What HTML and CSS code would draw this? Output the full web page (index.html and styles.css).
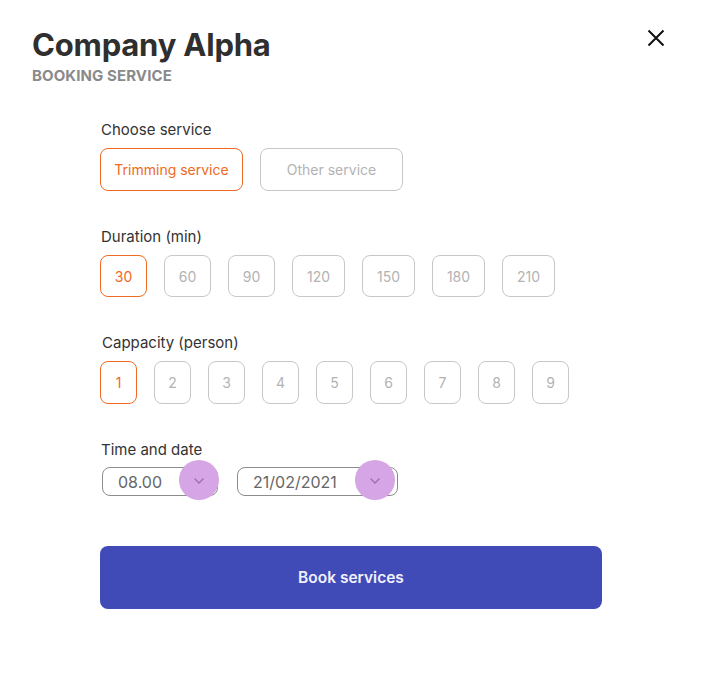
FILE: index.html
```html
<!DOCTYPE html>
<html>
<head>
<meta charset="utf-8">
<link rel="stylesheet" href="styles.css">
</head>
<body>
<div class="page">
  <header class="header">
    <div class="titles">
      <h1 class="title">Company Alpha</h1>
      <div class="subtitle">BOOKING SERVICE</div>
    </div>
    <button class="close" aria-label="Close">
      <svg width="18" height="18" viewBox="0 0 18 18"><path d="M1.5 1.5 L16.5 16.5 M16.5 1.5 L1.5 16.5" stroke="#111" stroke-width="2" fill="none"/></svg>
    </button>
  </header>

  <main class="form">
    <section class="group g-service">
      <div class="label">Choose service</div>
      <div class="options">
        <div class="opt service active">Trimming service</div>
        <div class="opt service">Other service</div>
      </div>
    </section>

    <section class="group g-duration">
      <div class="label">Duration (min)</div>
      <div class="options">
        <div class="opt dur active">30</div>
        <div class="opt dur">60</div>
        <div class="opt dur">90</div>
        <div class="opt dur wide">120</div>
        <div class="opt dur wide">150</div>
        <div class="opt dur wide">180</div>
        <div class="opt dur wide">210</div>
      </div>
    </section>

    <section class="group g-capacity">
      <div class="label label-cap">Cappacity (person)</div>
      <div class="options">
        <div class="opt cap active">1</div>
        <div class="opt cap">2</div>
        <div class="opt cap">3</div>
        <div class="opt cap">4</div>
        <div class="opt cap">5</div>
        <div class="opt cap">6</div>
        <div class="opt cap">7</div>
        <div class="opt cap">8</div>
        <div class="opt cap">9</div>
      </div>
    </section>

    <section class="group g-time">
      <div class="label">Time and date</div>
      <div class="selects">
        <div class="select time">
          <span>08.00</span>
          <span class="knob"><svg width="12" height="8" viewBox="0 0 12 8"><path d="M1.5 1.5 L6 6 L10.5 1.5" stroke="#9c6fae" stroke-width="1.3" fill="none"/></svg></span>
        </div>
        <div class="select date">
          <span>21/02/2021</span>
          <span class="knob"><svg width="12" height="8" viewBox="0 0 12 8"><path d="M1.5 1.5 L6 6 L10.5 1.5" stroke="#9c6fae" stroke-width="1.3" fill="none"/></svg></span>
        </div>
      </div>
    </section>

    <button class="book">Book services</button>
  </main>
</div>
</body>
</html>
```

FILE: styles.css
```css
* { box-sizing: border-box; }
html, body { margin: 0; padding: 0; background: #fff; }
body { font-family: "Inter", "Roboto", "Liberation Sans", sans-serif; color: #333; }

.page { width: 702px; height: 688px; }

.header {
  display: flex;
  justify-content: space-between;
  align-items: flex-start;
  padding: 26px 37px 0 32px;
}
.title {
  margin: 0;
  font-size: 31px;
  line-height: 38px;
  font-weight: 700;
  color: #2f2f2f;
  letter-spacing: -0.2px;
}
.subtitle {
  margin-top: 3px;
  font-size: 15px;
  line-height: 17px;
  font-weight: 700;
  color: #8a8a8a;
  letter-spacing: 0.1px;
}
.close {
  border: 0;
  background: none;
  padding: 0;
  margin-top: 3px;
  width: 18px;
  height: 18px;
  cursor: pointer;
}

.form {
  padding: 37px 0 0 100px;
}
.group { margin-bottom: 37px; }
.g-time { margin-bottom: 0; }
.label {
  font-size: 15px;
  line-height: 18px;
  color: #333;
  margin: 0 0 9px 1px;
}
.g-time .label { margin-bottom: 8px; }
.label-cap { margin-left: 2px; }

.options { display: flex; gap: 17px; }
.opt {
  display: flex;
  align-items: center;
  justify-content: center;
  border: 1px solid #c7c7c7;
  border-radius: 8px;
  color: #b3b3b3;
  font-size: 14px;
  height: 43px;
}
.opt.active { border-color: #ef6a22; color: #ef6a22; }
.service { width: 143px; }
.dur { width: 47px; height: 42px; }
.dur.wide { width: 53px; }
.cap { width: 37px; }

.selects { display: flex; gap: 19px; padding-left: 2px; }
.select {
  position: relative;
  height: 29px;
  border: 1px solid #8c8c8c;
  border-radius: 8px;
  display: flex;
  align-items: center;
  padding-left: 15px;
  font-size: 16px;
  color: #666;
}
.select.time { width: 116px; }
.select.date { width: 161px; }
.knob {
  position: absolute;
  top: -8px;
  right: -2px;
  width: 40px;
  height: 40px;
  border-radius: 50%;
  background: #d6a5e6;
  display: flex;
  align-items: center;
  justify-content: center;
  padding-top: 2px;
}
.select.date .knob { right: 2px; }

.book {
  display: block;
  margin-top: 50px;
  width: 502px;
  height: 63px;
  border: 0;
  border-radius: 8px;
  background: #414bb8;
  color: #f1f1ff;
  font-family: inherit;
  font-size: 15.5px;
  font-weight: 600;
}
```
